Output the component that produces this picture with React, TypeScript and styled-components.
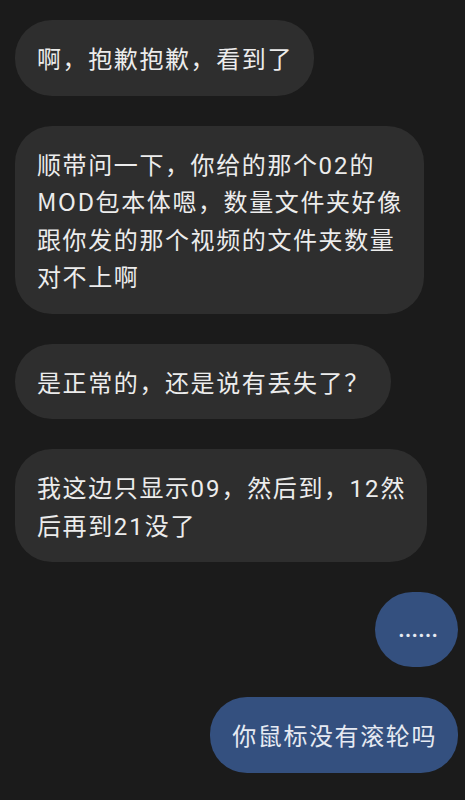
import React from 'react'
import styled, { createGlobalStyle } from 'styled-components'

const GlobalStyle = createGlobalStyle`
  html, body {
    margin: 0;
    padding: 0;
    background: #1b1b1b;
    overflow: hidden;
  }
  body {
    font-family: 'Noto Sans CJK SC', 'Noto Sans', sans-serif;
  }
`

const Thread = styled.div`
  display: flex;
  flex-direction: column;
  gap: 30px;
  padding: 20px 7px 0 15px;
  height: 800px;
  box-sizing: border-box;
  overflow: hidden;
`

const Row = styled.div<{ $mine?: boolean }>`
  display: flex;
  justify-content: ${(props) => (props.$mine ? 'flex-end' : 'flex-start')};
`

const Bubble = styled.div<{ $mine?: boolean }>`
  background: ${(props) => (props.$mine ? '#34507f' : '#2e2e2e')};
  color: ${(props) => (props.$mine ? '#e6eaf2' : '#ececec')};
  border-radius: 37px;
  padding: 19px 21px 19px 22px;
  font-size: 24px;
  line-height: 37.5px;
  letter-spacing: 1.6px;
  white-space: nowrap;
`

const Num = styled.span`
  font-family: Roboto, 'Noto Sans', sans-serif;
  letter-spacing: 2px;
  line-height: 0;
`

const Dots = styled.div`
  background: #34507f;
  color: #e6eaf2;
  width: 83px;
  height: 75px;
  border-radius: 38px;
  display: flex;
  align-items: center;
  justify-content: center;
  padding: 10px 0 0 3px;
  box-sizing: border-box;
  font-size: 20px;
  font-weight: 700;
  letter-spacing: 0;
`

const Card = styled.div`
  width: 225px;
  height: 60px;
  margin: -3px 1px 0 0;
  background: #f4f4f4;
  border-radius: 14px;
`

const incoming = [
  ['啊，抱歉抱歉，看到了'],
  ['顺带问一下，你给的那个02的', 'MOD包本体嗯，数量文件夹好像', '跟你发的那个视频的文件夹数量', '对不上啊'],
  ['是正常的，还是说有丢失了？'],
  ['我这边只显示09，然后到，12然', '后再到21没了'],
]

// digits render wider than the CJK font's own latin glyphs
const Line: React.FC<{ text: string }> = ({ text }) => (
  <>
    {text.split(/(\d+)/).map((part, i) =>
      /^\d+$/.test(part) ? <Num key={i}>{part}</Num> : <React.Fragment key={i}>{part}</React.Fragment>
    )}
  </>
)

const Lines: React.FC<{ lines: string[] }> = ({ lines }) => (
  <>
    {lines.map((line, i) => (
      <React.Fragment key={i}>
        {i > 0 && <br />}
        <Line text={line} />
      </React.Fragment>
    ))}
  </>
)

export default function App() {
  return (
    <>
      <GlobalStyle />
      <Thread>
        {incoming.map((lines, i) => (
          <Row key={i}>
            <Bubble>
              <Lines lines={lines} />
            </Bubble>
          </Row>
        ))}
        <Row $mine>
          <Dots>……</Dots>
        </Row>
        <Row $mine>
          <Bubble $mine>你鼠标没有滚轮吗</Bubble>
        </Row>
        <Row $mine>
          <Card />
        </Row>
      </Thread>
    </>
  )
}
